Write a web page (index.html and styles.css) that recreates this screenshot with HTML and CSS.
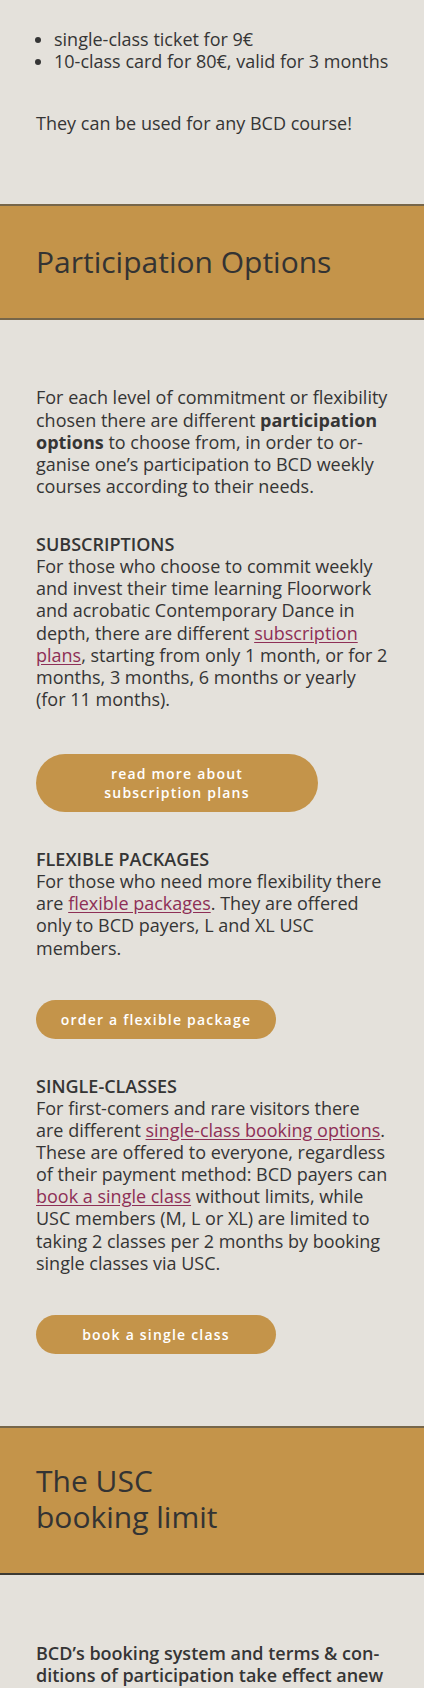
FILE: index.html
```html
<!DOCTYPE html>
<html lang="en">
<head>
    <meta charset="UTF-8">
    <meta name="viewport" content="width=device-width, initial-scale=1.0">
    <title>BCD - Participation Options</title>
    <link rel="stylesheet" href="styles.css">
</head>
<body>
    <!-- prices, tail of the previous section -->
    <section class="content content-top">
        <ul class="price-list">
            <li>single-class ticket for 9€</li>
            <li>10-class card for 80€, valid for 3 months</li>
        </ul>
        <p class="note">They can be used for any BCD course!</p>
    </section>

    <section class="band">
        <h2 class="band-title">Participation Options</h2>
    </section>

    <section class="content">
        <p>For each level of commitment or flexibility chosen there are different <strong>participation options</strong> to choose from, in order to or&shy;ganise one’s participation to BCD weekly courses according to their needs.</p>

        <div class="option">
            <h3>SUBSCRIPTIONS</h3>
            <p>For those who choose to commit weekly and invest their time learning Floorwork and acrobatic Contemporary Dance in depth, there are different <a href="#">subscription plans</a>, starting from only 1 month, or for 2 months, 3 months, 6 months or yearly (for 11 months).</p>
        </div>
        <a class="btn btn-wide" href="#">read more about subscription plans</a>

        <div class="option">
            <h3>FLEXIBLE PACKAGES</h3>
            <p>For those who need more flexibility there are <a href="#">flexible packages</a>. They are offered only to BCD payers, L and XL USC members.</p>
        </div>
        <a class="btn" href="#">order a flexible package</a>

        <div class="option">
            <h3>SINGLE-CLASSES</h3>
            <p>For first-comers and rare visitors there are different <a href="#">single-class booking options</a>. These are offered to everyone, regardless of their payment method: BCD payers can <a href="#">book a single class</a> without limits, while USC members (M, L or XL) are limited to taking 2 classes per 2 months by booking single classes via USC.</p>
        </div>
        <a class="btn" href="#">book a single class</a>
    </section>

    <section class="band band-dark">
        <h2 class="band-title band-title-narrow">The USC booking limit</h2>
    </section>

    <section class="content content-last">
        <p class="lead">BCD’s booking system and terms &amp; con&shy;ditions of participation take effect anew</p>
    </section>
</body>
</html>
```

FILE: styles.css
```css
*{
    box-sizing: border-box;
}
body{
    margin: 0;
    background-color: #e4e1db;
    color: #353535;
    font-family: "Open Sans", "Liberation Sans", sans-serif;
    font-size: 18px;
    line-height: 1.23;
}
p,h2,h3,ul{
    margin: 0;
}
a{
    color: #8e2f56;
    text-decoration: underline;
    text-underline-offset: 2px;
}

/* text sections */
.content{
    padding: 66px 35px 72px 36px;
}
.content-top{
    padding-top: 28px;
    padding-bottom: 70px;
}
.content-last{
    padding-top: 67px;
    padding-bottom: 0;
}
.price-list{
    padding-left: 18px;
}
.note{
    margin-top: 40px;
}
.option{
    margin-top: 36px;
}
.option h3{
    font-size: 18px;
    font-weight: 600;
    line-height: 1.23;
}
.lead{
    font-weight: 600;
}

/* coloured title bands */
.band{
    background-color: #c4944a;
    border-top: 2px solid #76664a;
    border-bottom: 2px solid #76664a;
    padding: 38px 36px 38px;
}
.band-dark{
    border-bottom-color: #3c3a33;
    padding-top: 35px;
}
.band-title{
    font-size: 30px;
    font-weight: 400;
    line-height: 1.2;
    color: #333;
}
.band-title-narrow{
    max-width: 200px;
}

/* pill buttons */
.btn{
    display: block;
    width: 240px;
    margin-top: 41px;
    padding: 10px 14px;
    border-radius: 30px;
    background-color: #c4944a;
    color: #fff;
    font-size: 14px;
    font-weight: 600;
    line-height: 19px;
    letter-spacing: 1.2px;
    text-align: center;
    text-decoration: none;
}
.btn-wide{
    width: 282px;
    margin-top: 44px;
    padding: 10px 64px;
}
```
